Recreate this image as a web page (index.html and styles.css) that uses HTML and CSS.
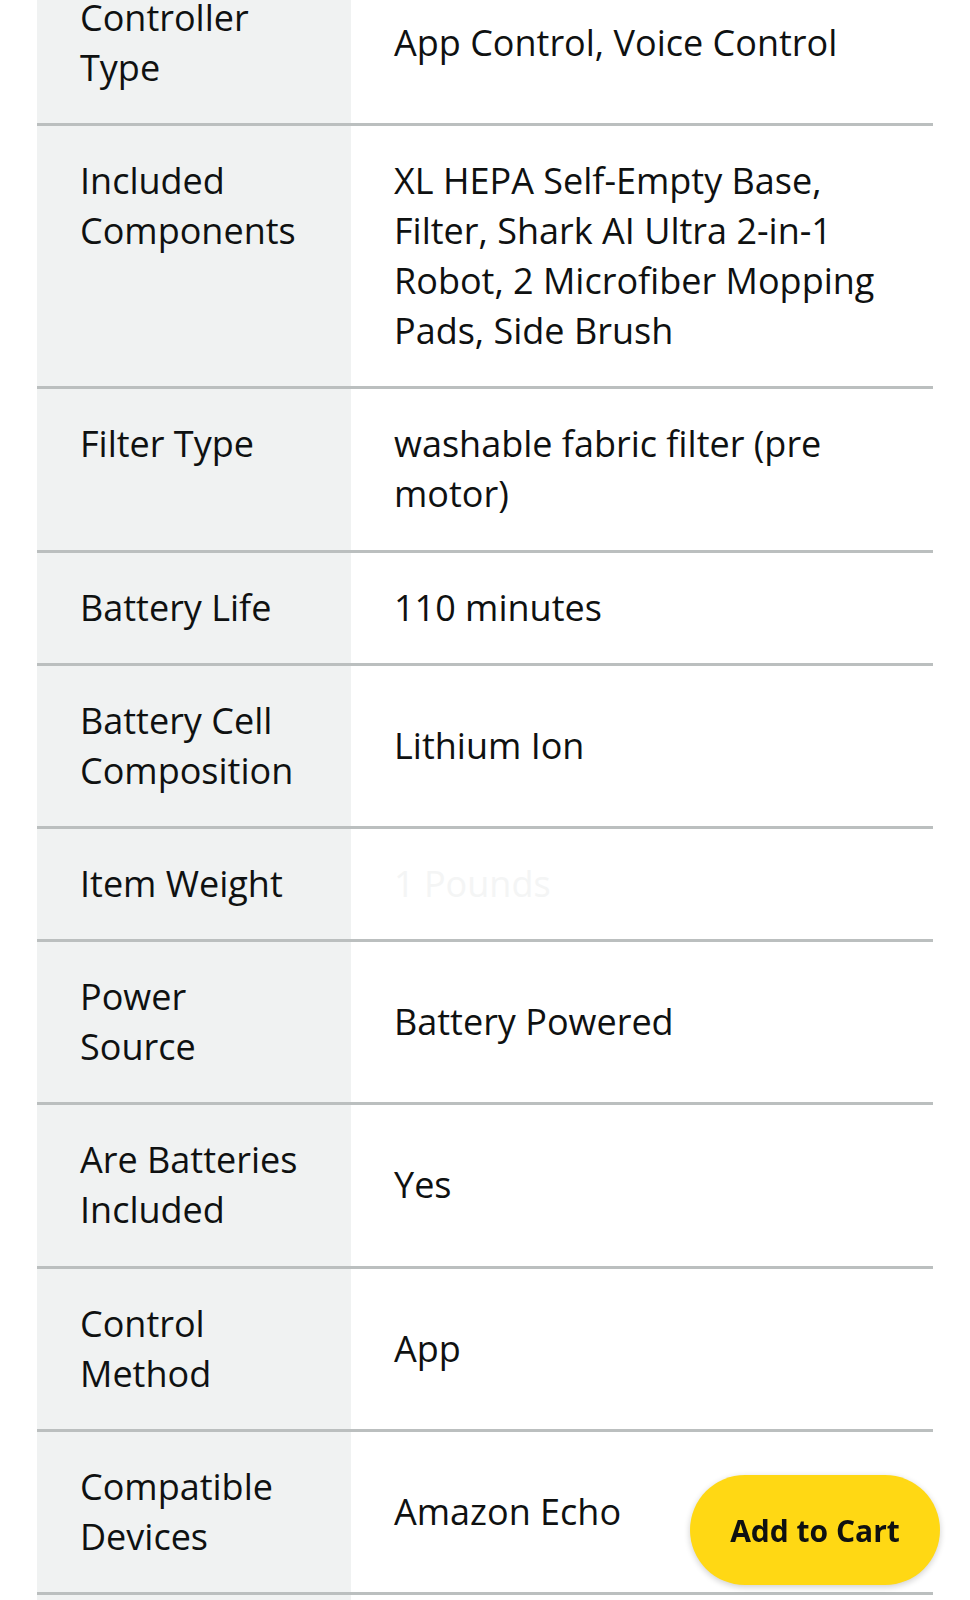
FILE: index.html
```html
<!DOCTYPE html>
<html lang="en">
<head>
<meta charset="utf-8">
<title>Product details</title>
<link rel="stylesheet" href="styles.css">
</head>
<body>
<main class="specs">
  <div class="spec-row">
    <div class="spec-label">Controller Type</div>
    <div class="spec-value">App Control, Voice Control</div>
  </div>
  <div class="spec-row">
    <div class="spec-label">Included Components</div>
    <div class="spec-value">XL HEPA Self-Empty Base, Filter, Shark AI Ultra 2-in-1 Robot, 2 Microfiber Mopping Pads, Side Brush</div>
  </div>
  <div class="spec-row">
    <div class="spec-label">Filter Type</div>
    <div class="spec-value">washable fabric filter (pre motor)</div>
  </div>
  <div class="spec-row">
    <div class="spec-label">Battery Life</div>
    <div class="spec-value">110 minutes</div>
  </div>
  <div class="spec-row">
    <div class="spec-label">Battery Cell Composition</div>
    <div class="spec-value">Lithium Ion</div>
  </div>
  <div class="spec-row">
    <div class="spec-label">Item Weight</div>
    <div class="spec-value spec-value--faded">1 Pounds</div>
  </div>
  <div class="spec-row">
    <div class="spec-label">Power Source</div>
    <div class="spec-value">Battery Powered</div>
  </div>
  <div class="spec-row">
    <div class="spec-label">Are Batteries Included</div>
    <div class="spec-value">Yes</div>
  </div>
  <div class="spec-row">
    <div class="spec-label">Control Method</div>
    <div class="spec-value">App</div>
  </div>
  <div class="spec-row">
    <div class="spec-label">Compatible Devices</div>
    <div class="spec-value">Amazon Echo</div>
  </div>
</main>
<button class="add-to-cart" type="button">Add to Cart</button>
</body>
</html>
```

FILE: styles.css
```css
html, body {
  margin: 0;
  padding: 0;
  background: #ffffff;
}

body {
  font-family: "Open Sans", "Noto Sans", sans-serif;
  color: #0f1111;
  font-size: 36px;
  line-height: 50px;
  overflow: hidden;
}

.specs {
  width: 896px;
  margin: -37px 0 0 37px;
}

.specs::after {
  content: "";
  display: block;
  height: 40px;
  background: linear-gradient(to right, #f0f2f2 314px, #ffffff 314px);
}

.spec-row {
  display: grid;
  grid-template-columns: 314px 1fr;
  border-bottom: 3px solid #bbbfbf;
}

.spec-label {
  background: #f0f2f2;
  padding: 30.1px 48px 30.1px 43px;
}

.spec-value {
  align-self: center;
  padding: 30.1px 40px 30.1px 43px;
}

.spec-value--faded {
  color: #f4f5f5;
}

.add-to-cart {
  position: fixed;
  right: 30px;
  bottom: 15px;
  width: 250px;
  height: 110px;
  border: none;
  border-radius: 55px;
  background: #ffd814;
  color: #0f1111;
  font-family: "Open Sans", "Noto Sans", sans-serif;
  font-weight: 700;
  font-size: 30px;
  padding: 0;
  box-shadow: 0 2px 6px rgba(15, 17, 17, 0.2);
}
```
